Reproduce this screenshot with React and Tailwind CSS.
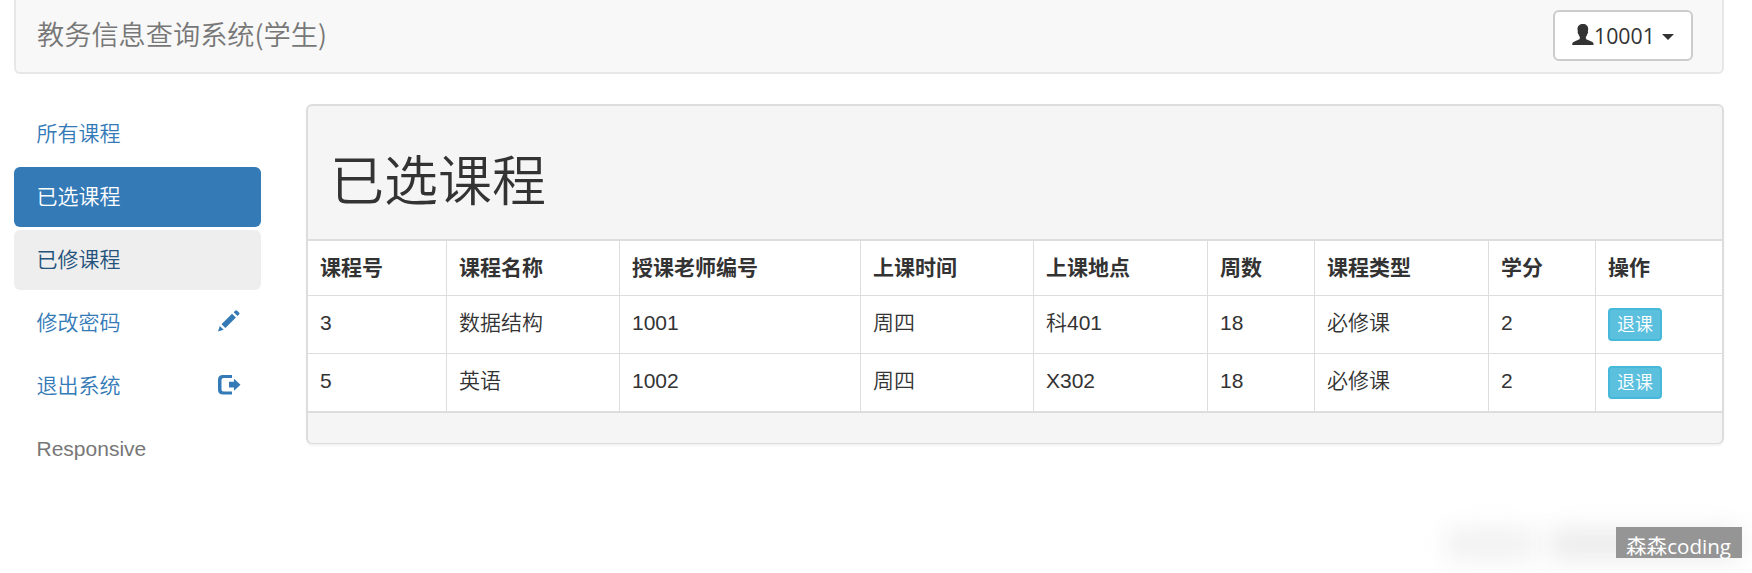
const navItems = [
  { label: "所有课程", style: "text-[#337ab7]" },
  { label: "已选课程", style: "bg-[#337ab7] text-white" },
  { label: "已修课程", style: "bg-[#eeeeee] text-[#23527c]" },
  { label: "修改密码", style: "text-[#337ab7]", icon: PencilIcon },
  { label: "退出系统", style: "text-[#337ab7]", icon: LogoutIcon },
  { label: "Responsive", style: "text-[#777777]" },
];

const headers = ["课程号", "课程名称", "授课老师编号", "上课时间", "上课地点", "周数", "课程类型", "学分", "操作"];

const rows = [
  ["3", "数据结构", "1001", "周四", "科401", "18", "必修课", "2"],
  ["5", "英语", "1002", "周四", "X302", "18", "必修课", "2"],
];

const grid =
  "grid grid-cols-[139px_173px_241px_173px_174px_107px_174px_107px_126px] divide-x divide-[#dddddd]";

function UserIcon() {
  return (
    <svg width="22" height="21" viewBox="0 0 22 21" fill="currentColor" className="-mt-[3px] shrink-0">
      <path d="M11 0C7.600 0 5.500 2 5.500 5c0 1 .1 1.700.4 2.200-.6.500-.2 2.200.5 2.700.3 1.300.8 2.200 1.400 2.900v1.700c0 .7-.6 1-1.500 1.300L2 17.700C.7 18.300.2 19 .2 21h21.400c0-2-.4-2.700-1.700-3.300l-4.500-1.900c-.9-.3-1.500-.6-1.500-1.300v-1.700c.6-.7 1.100-1.600 1.400-2.900.7-.5 1.100-2.200.5-2.700.3-.500.4-1.200.4-2.200 0-3-2-5-5.200-5z" />
    </svg>
  );
}

function PencilIcon() {
  return (
    <svg width="22" height="22" viewBox="0 0 22 22" fill="currentColor" className="-mt-[5px] mr-px">
      <path d="M0 21.500 1.800 15.900 5.700 19.700zM3.500 14.200 14 3.700 17.900 7.600 7.400 18.100zM15.700 2.300 17.200.8c.7-.7 1.300-.7 2 0l1.800 1.800c.7.7.7 1.300 0 2l-1.500 1.500z" />
    </svg>
  );
}

function LogoutIcon() {
  return (
    <svg width="23" height="20" viewBox="0 0 23 20" fill="currentColor" className="-mt-[3px]">
      <path d="M14 0v3H5.500Q3.500 3 3.500 5v9.500q0 2 2 2H14v3H5Q0 19.500 0 14.500V5Q0 0 5 0z" />
      <path d="M11 6.700h5V3.700l6.500 6-6.500 6v-3.200h-5z" />
    </svg>
  );
}

export default function App() {
  return (
    <div className="relative h-[573px] overflow-hidden bg-white pl-3.5 pr-7 font-['Liberation_Sans','Noto_Sans_CJK_SC',sans-serif] text-[21px] leading-[30px] text-[#333333]">
      <nav className="flex h-[74px] items-start justify-between rounded-b-md border-2 border-t-0 border-[#e7e7e7] bg-[#f8f8f8] pl-[21px] pr-[29px]">
        <span className="pt-[13px] font-['Noto_Sans_CJK_SC',sans-serif] text-[27.2px] font-[350] leading-10 text-[#777777]">
          教务信息查询系统(学生)
        </span>
        <button className="mt-2.5 flex h-[51px] w-[140px] items-center rounded-md border-2 border-[#cccccc] bg-white pl-[17px] font-['Open_Sans','Noto_Sans_CJK_SC',sans-serif]">
          <UserIcon />
          <span className="text-[21.300px]">10001</span>
          <svg width="12" height="6" viewBox="0 0 12 6" className="ml-[7px] mt-0.5" fill="currentColor">
            <path d="M0 0h12L6 6z" />
          </svg>
        </button>
      </nav>

      <div className="flex items-start gap-[45px] pt-[30px]">
        <ul className="flex w-[247px] shrink-0 flex-col gap-[3px]">
          {navItems.map(({ label, style, icon: Icon }) => (
            <li key={label} className={`flex h-[60px] items-center justify-between rounded-md pl-[22.5px] pr-5 font-[350] ${style}`}>
              <span>{label}</span>
              {Icon && <Icon />}
            </li>
          ))}
        </ul>

        <section className="w-[1418px] shrink-0 overflow-hidden rounded-md border-2 border-b border-[#dddddd] bg-[#f5f5f5] shadow-[0_2px_2px_rgba(0,0,0,0.05)]">
          <header className="h-[133px] px-[22px] pt-[46px]">
            <h1 className="text-[54px] font-[350] leading-[60px]">已选课程</h1>
          </header>
          <div className="divide-y divide-[#dddddd] border-y-2 border-[#dddddd] bg-white">
            <div className={`${grid} h-[55px] font-bold`}>
              {headers.map((h) => (
                <div key={h} className="px-3 pt-3">{h}</div>
              ))}
            </div>
            {rows.map((row) => (
              <div key={row[0]} className={`${grid} h-[58px] last:h-[57px]`}>
                {row.map((cell, i) => (
                  <div key={i} className="px-3 pt-3 font-[350]">{cell}</div>
                ))}
                <div className="px-3 pt-3">
                  <button className="flex h-[33px] w-[54px] items-center justify-center rounded border-2 border-[#46b8da] bg-[#5bc0de] text-[18px] font-[350] leading-none text-white">
                    退课
                  </button>
                </div>
              </div>
            ))}
          </div>
          <footer className="h-[30px]" />
        </section>
      </div>

      <div className="absolute left-[1446px] top-[528px] h-8 w-[90px] bg-[#f1f1f1] blur-[12px]" />
      <div className="absolute left-[1550px] top-[528px] h-8 w-[190px] bg-[#ececec] blur-[12px]" />
      <div className="absolute left-[1616px] top-[527px] h-[31px] w-[126px] bg-[#959595] pl-2.5 pt-[7px] font-['Open_Sans','Noto_Sans_CJK_SC',sans-serif] text-[20.6px] leading-6 text-white">
        森森coding
      </div>
    </div>
  );
}
